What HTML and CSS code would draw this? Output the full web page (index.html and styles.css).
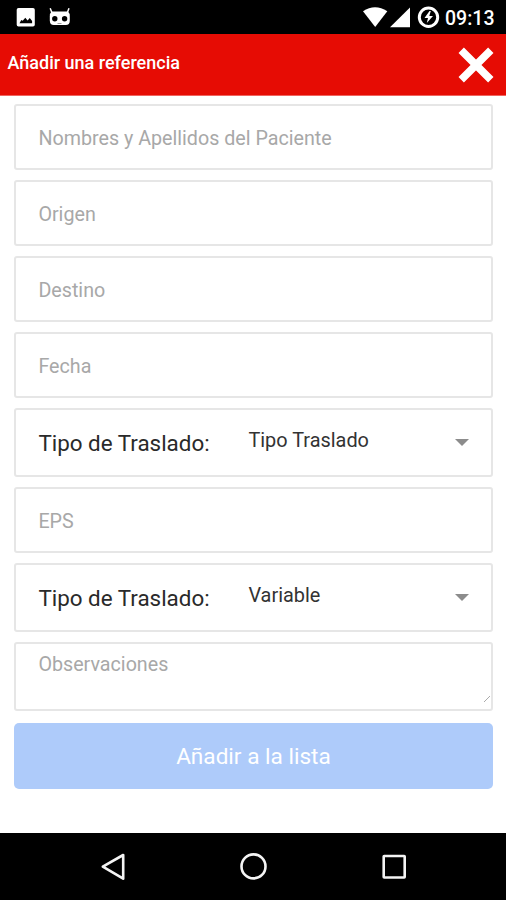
FILE: index.html
```html
<!DOCTYPE html>
<html lang="es">
<head>
<meta charset="utf-8">
<title>Añadir una referencia</title>
<link rel="stylesheet" href="styles.css">
</head>
<body>
<div class="status">
  <svg class="status-left" width="60" height="34" viewBox="0 0 60 34">
    <path fill="#fff" fill-rule="evenodd" d="M2.500 8h14.500q1.800 0 1.800 1.800v15q0 1.800-1.800 1.800h-14.500q-1.800 0-1.800-1.800v-15q0-1.800 1.800-1.800zM3.500 23.300h12.600v-2.300l-2.300-3-2.200 2.500-2.300-2.700-2.600 3-1.400-.8z"/>
    <path fill="#fff" d="M35.500 11.500h16.500q1.800 1.500 1.800 5v4q0 4.500-4 4.500h-12q-4 0-4-4.500v-4q0-3.500 1.700-5z"/>
    <path fill="none" stroke="#fff" stroke-width="1.500" d="M34.200 8.200l2 5.300M53 8.200l-2 5.300"/>
    <circle cx="38.800" cy="18.800" r="2.700"/><circle cx="48.600" cy="18.800" r="2.700"/>
    <path stroke="#999" d="M41.500 23.500h4"/>
  </svg>
  <svg class="status-right" width="80" height="34" viewBox="0 0 80 34">
    <path fill="#fff" d="M1 11.200Q13 3.500 25.300 11.200L13.200 27z"/>
    <path fill="#fff" d="M48 7.500V27.300H28z"/>
    <circle cx="66.500" cy="17.200" r="9.200" fill="none" stroke="#fff" stroke-width="3"/>
    <path fill="#fff" d="M67.500 11l-5 7h3.500l-1.200 5 6.200-7h-3.700l1.500-5z"/>
  </svg>
  <span class="clock">09:13</span>
</div>
<header class="bar">
  <h1 class="title">Añadir una referencia</h1>
  <svg class="close" width="36" height="36" viewBox="0 0 36 36"><path d="M3.200 3.200l29.600 29.600M32.800 3.200L3.200 32.800" stroke="#fff" stroke-width="7.600"/></svg>
</header>
<main class="form">
  <div class="field"><span class="hint">Nombres y Apellidos del Paciente</span></div>
  <div class="field"><span class="hint">Origen</span></div>
  <div class="field"><span class="hint">Destino</span></div>
  <div class="field"><span class="hint">Fecha</span></div>
  <div class="field select"><span class="label">Tipo de Traslado:</span><span class="value">Tipo Traslado</span><i class="arrow"></i></div>
  <div class="field"><span class="hint">EPS</span></div>
  <div class="field select"><span class="label">Tipo de Traslado:</span><span class="value">Variable</span><i class="arrow"></i></div>
  <div class="field area"><span class="hint">Observaciones</span><svg class="grip" width="8" height="8" viewBox="0 0 8 8"><path d="M1 7L7 1" stroke="#aaa"/></svg></div>
  <div class="submit"><span>Añadir a la lista</span></div>
</main>
<nav class="nav">
  <svg width="506" height="67" viewBox="0 0 506 67" fill="none" stroke="#f4f4f4" stroke-width="2.600">
    <path stroke-linejoin="round" d="M102.800 33.700L123.200 22v23.700z"/>
    <circle cx="253.500" cy="33.400" r="12"/>
    <rect x="383.700" y="23" width="21" height="21.500" rx=".5"/>
  </svg>
</nav>
</body>
</html>
```
FILE: styles.css
```css
* { box-sizing: border-box; }
body {
  margin: 0;
  width: 506px;
  height: 900px;
  overflow: hidden;
  display: flex;
  flex-direction: column;
  background: #fff;
  font-family: Roboto, "Liberation Sans", sans-serif;
}
.status {
  height: 34px;
  flex: none;
  display: flex;
  background: #000;
  color: #fff;
}
.status-left { margin-left: 16px; }
.status-right { margin-left: auto; }
.clock {
  width: 64px;
  padding-left: 3px;
  font-size: 19.500px;
  font-weight: 500;
  line-height: 37px;
}
.bar {
  height: 62px;
  flex: none;
  display: flex;
  justify-content: space-between;
  padding: 13px 12.500px 0 7.500px;
  background: #e60c04;
  border-bottom: 1px solid #f0645f;
}
.title {
  margin: 0;
  color: #fff;
  font-size: 18px;
  font-weight: 500;
  line-height: 32px;
}
.form {
  flex: 1;
  display: flex;
  flex-direction: column;
  gap: 10px;
  padding: 8px 13.500px 0 14.400px;
}
.field {
  height: 66px;
  flex: none;
  display: flex;
  align-items: center;
  padding: 3px 22px 0;
  border: 2px solid #e6e6e6;
  border-radius: 3px;
}
.hint {
  color: #a8a8a8;
  font-size: 19.700px;
}
.select { height: 69px; padding-top: 0; }
.label {
  width: 210px;
  color: #2a2a2a;
  font-size: 22.400px;
}
.value {
  flex: 1;
  color: #333;
  font-size: 19.900px;
  padding-bottom: 4px;
}
.arrow {
  border: 7px solid transparent;
  border-top-color: #8c8c8c;
  border-bottom: 0;
}
.area {
  height: 69px;
  align-items: flex-start;
  padding-top: 9px;
  position: relative;
}
.grip { position: absolute; right: 0; bottom: 6px; }
.submit {
  height: 66px;
  flex: none;
  display: flex;
  align-items: center;
  justify-content: center;
  margin-top: 2px;
  padding-top: 1px;
  border-radius: 5px;
  background: #aecbfa;
  color: #fff;
  font-size: 22.600px;
}
.nav { height: 67px; flex: none; background: #000; }
.nav svg { display: block; }
```
